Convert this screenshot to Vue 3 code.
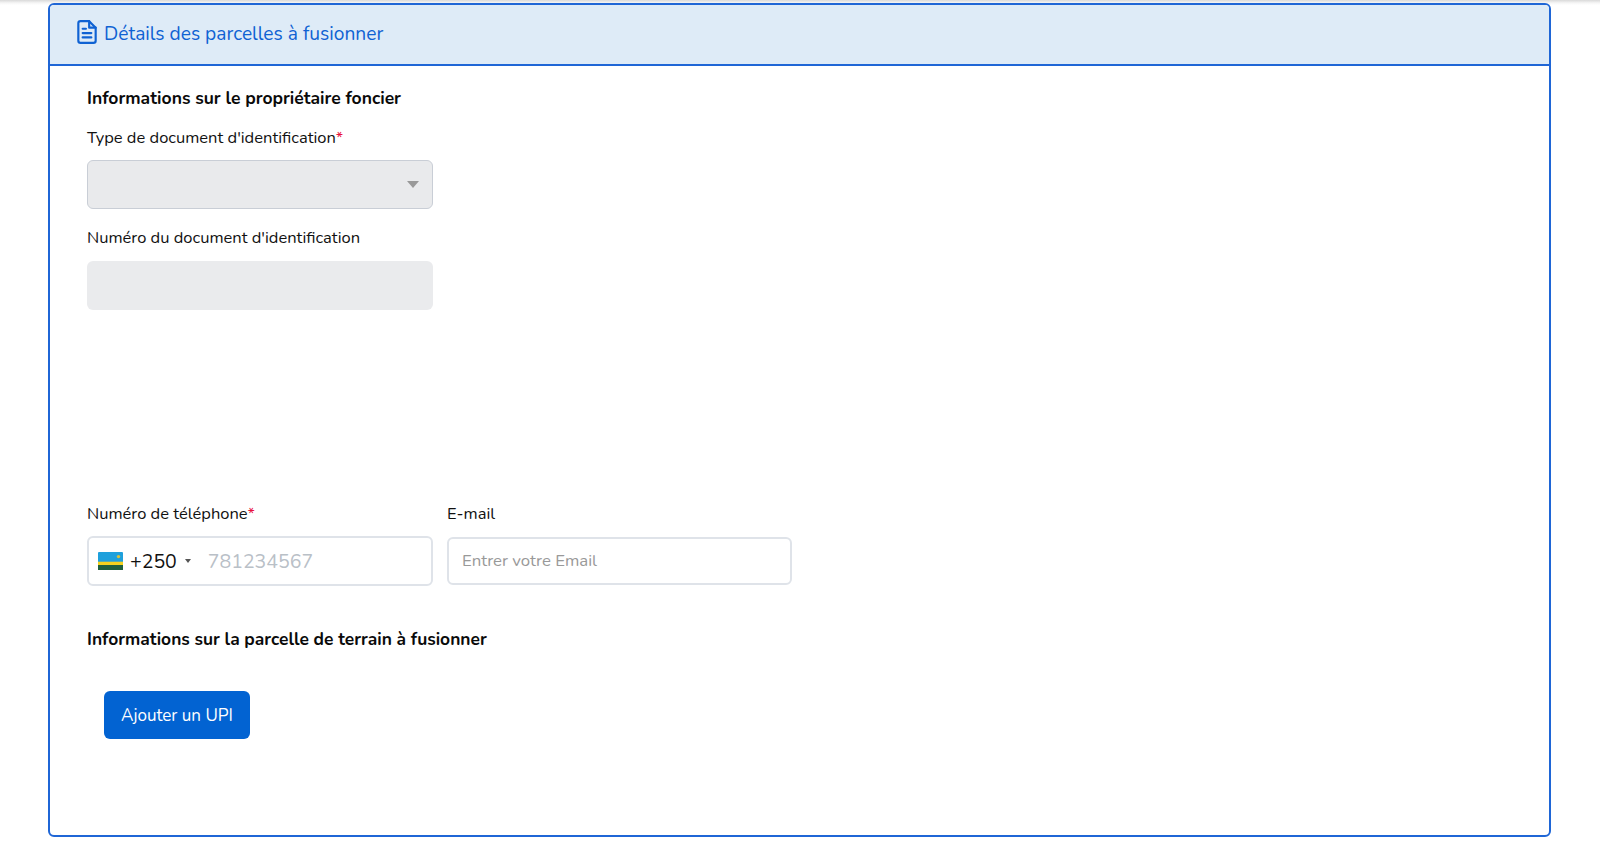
<script setup>
const docLines = ['M8 13h8', 'M8 17h8', 'M8 9h3']
</script>

<template>
  <main class="page">
    <section class="card">
      <header class="card-head">
        <svg class="doc-icon" viewBox="0 0 24 24" fill="none" stroke="currentColor" stroke-width="2" stroke-linecap="round" stroke-linejoin="round" aria-hidden="true">
          <path d="M14 2H6a2 2 0 0 0-2 2v16a2 2 0 0 0 2 2h12a2 2 0 0 0 2-2V8z" />
          <path d="M14 2v6h6" />
          <path v-for="d in docLines" :key="d" :d="d" />
        </svg>
        <h1 class="card-title">Détails des parcelles à fusionner</h1>
      </header>

      <div class="card-body">
        <h2 class="section-title">Informations sur le propriétaire foncier</h2>

        <div class="field field-type">
          <label class="label">Type de document d'identification<span class="req">*</span></label>
          <div class="select">
            <span class="caret"></span>
          </div>
        </div>

        <div class="field field-number">
          <label class="label">Numéro du document d'identification</label>
          <div class="input-disabled"></div>
        </div>

        <div class="contact-row">
          <div class="field phone-field">
            <label class="label">Numéro de téléphone<span class="req">*</span></label>
            <div class="phone">
              <svg class="flag" viewBox="0 0 25 18" aria-hidden="true">
                <rect width="25" height="18" rx="1" fill="#1ea0dc" />
                <rect y="9.7" width="25" height="3.3" fill="#f5d21f" />
                <rect y="13" width="25" height="5" fill="#20603d" />
                <circle cx="20.5" cy="4.6" r="1.7" fill="#d9c23a" />
              </svg>
              <span class="dial">+250</span>
              <span class="dial-caret"></span>
              <span class="phone-placeholder">781234567</span>
            </div>
          </div>
          <div class="field email-field">
            <label class="label">E-mail</label>
            <div class="email"><span class="email-placeholder">Entrer votre Email</span></div>
          </div>
        </div>

        <h2 class="section-title section-two">Informations sur la parcelle de terrain à fusionner</h2>

        <button class="add-btn" type="button">Ajouter un UPI</button>
      </div>
    </section>
  </main>
</template>

<style>
html, body { margin: 0; background: #fff; }
</style>

<style scoped>
.page {
  box-sizing: border-box;
  width: 1600px;
  height: 842px;
  padding: 3px 48px 0;
  background: linear-gradient(#d9d9d9, #f6f6f6 3px, #fff 5px);
  font-family: "Nunito", "Lato", "Open Sans", sans-serif;
  color: #111;
  overflow: hidden;
}
.card {
  box-sizing: border-box;
  width: 1503px;
  height: 834px;
  border: 2px solid #1f66d6;
  border-radius: 6px;
  background: #fff;
}
.card-head {
  box-sizing: border-box;
  height: 61px;
  display: flex;
  align-items: center;
  gap: 4px;
  padding: 0 0 1px 24px;
  background: #deebf7;
  border-bottom: 2px solid #1f66d6;
  border-radius: 4px 4px 0 0;
  color: #0f62d3;
}
.doc-icon { width: 26px; height: 26px; margin-top: -4px; }
.card-title { margin: 0; font-size: 19.2px; font-weight: 400; }
.card-body { padding: 20px 0 0 37px; }
.section-title { margin: 0; font-size: 17.5px; line-height: 24px; font-weight: 700; color: #0a0a0a; }
.field { display: flex; flex-direction: column; width: 346px; }
.field-type { margin-top: 16px; }
.label { font-size: 16.5px; line-height: 24px; color: #111; }
.req { color: #e8103c; }
.select {
  box-sizing: border-box;
  height: 49px;
  margin-top: 10px;
  display: flex;
  align-items: center;
  justify-content: flex-end;
  padding-right: 13px;
  background: #e9eaec;
  border: 1px solid #c9ced6;
  border-radius: 6px;
}
.caret { border: 6px solid transparent; border-top: 7px solid #999; border-bottom: 0; }
.field-number { margin-top: 17px; }
.input-disabled { height: 49px; margin-top: 11px; background: #eaebed; border-radius: 6px; }
.contact-row { display: flex; gap: 14px; margin-top: 192px; }
.email-field { width: 345px; }
.phone {
  box-sizing: border-box;
  height: 50px;
  margin-top: 10px;
  display: flex;
  align-items: center;
  padding-left: 9px;
  background: #fff;
  border: 2px solid #dfe3e9;
  border-radius: 6px;
}
.flag { width: 25px; height: 18px; }
.dial { margin-left: 7px; font-size: 19.5px; color: #111; }
.dial-caret { margin-left: 8px; border: 3.5px solid transparent; border-top: 4px solid #555; border-bottom: 0; }
.phone-placeholder { margin-left: 17px; font-size: 19.5px; color: #b9c0c7; }
.email {
  box-sizing: border-box;
  height: 48px;
  margin-top: 11px;
  display: flex;
  align-items: center;
  padding: 0 0 1px 13px;
  background: #fff;
  border: 2px solid #dfe3e9;
  border-radius: 6px;
}
.email-placeholder { font-size: 16.8px; color: #999; }
.section-two { margin-top: 41px; font-size: 17.4px; }
.add-btn {
  display: block;
  box-sizing: border-box;
  width: 146px;
  height: 48px;
  margin: 40px 0 0 17px;
  padding: 0;
  border: 0;
  border-radius: 6px;
  background: #0263d2;
  color: #fff;
  font: 400 17px "Nunito", "Lato", "Open Sans", sans-serif;
}
</style>
